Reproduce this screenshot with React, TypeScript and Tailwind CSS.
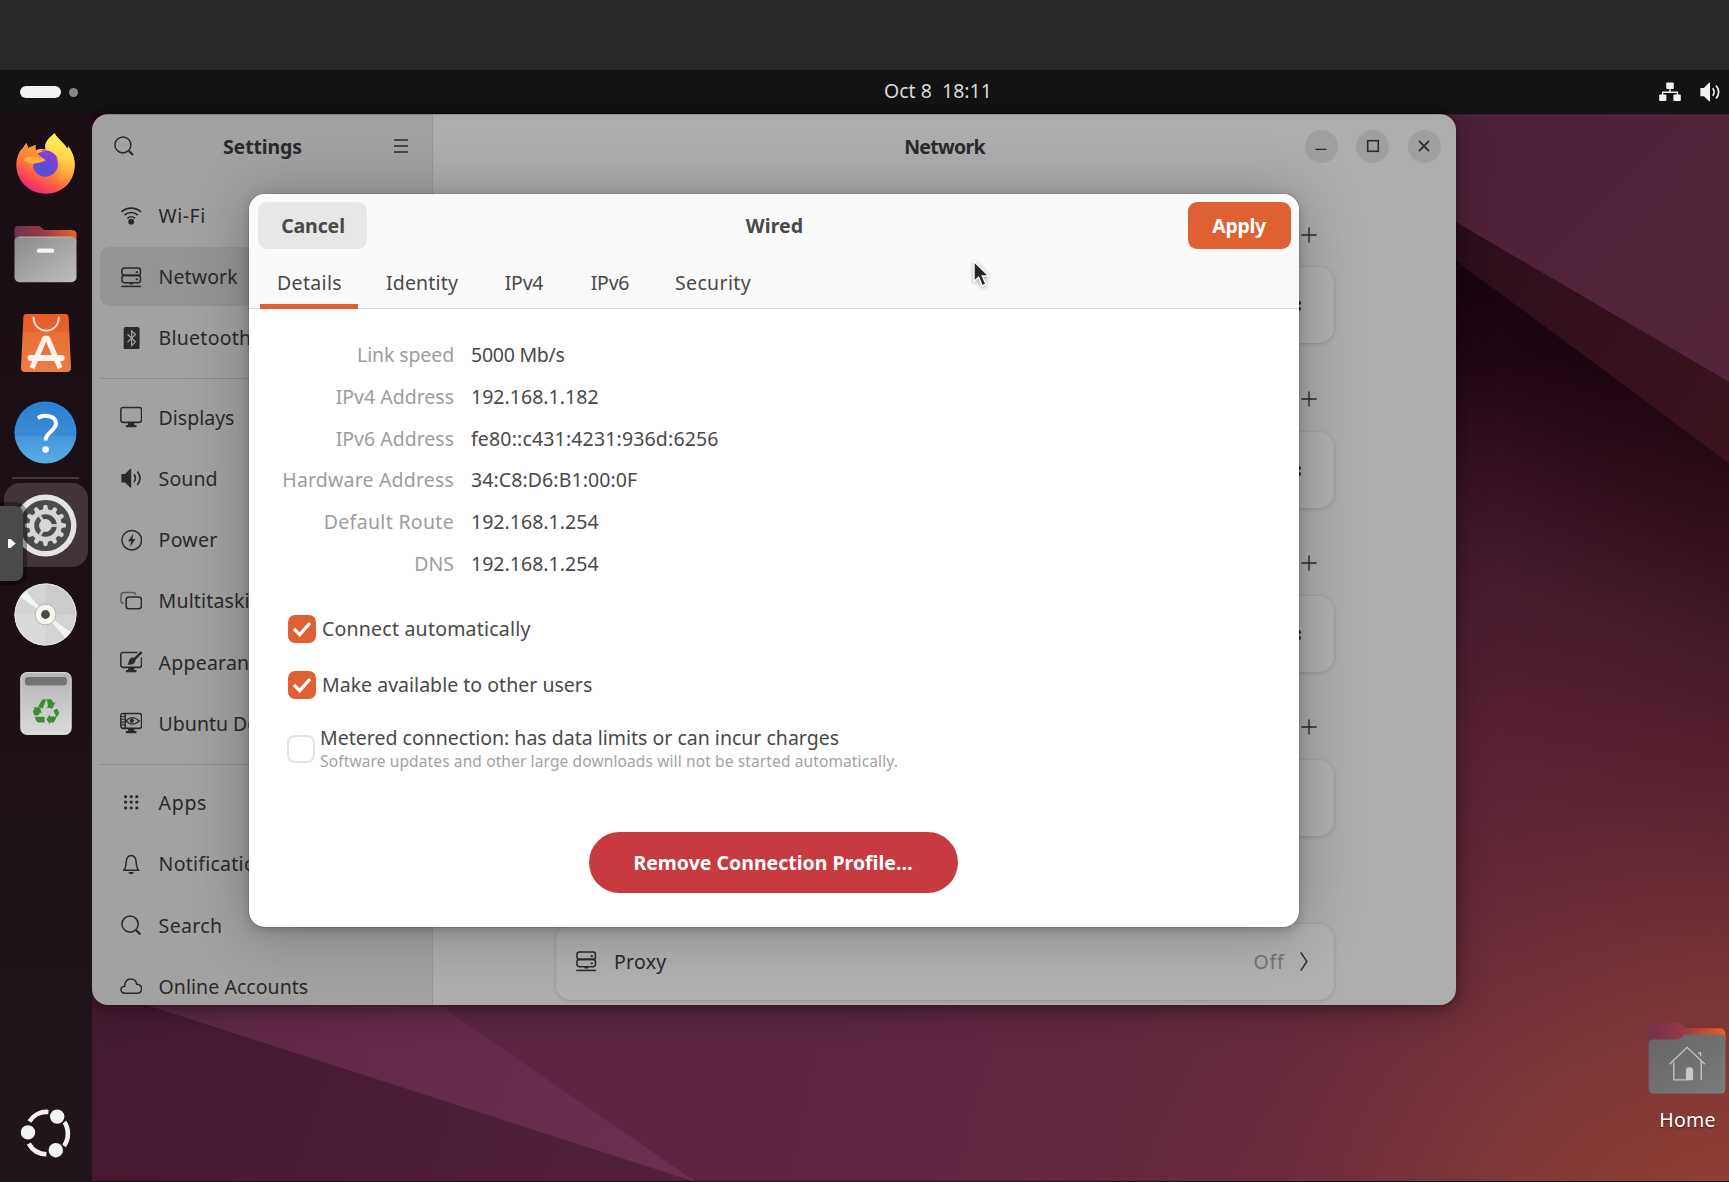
import React from "react";

type IconProps = { className?: string };

const ICON = "h-[22.4px] w-[22.4px] shrink-0";

/* ---------- wallpaper ---------- */

function Wallpaper() {
  return (
    <svg className="absolute inset-0" width="1729" height="1182" viewBox="0 0 1729 1182">
      <defs>
        <linearGradient id="wpDeep" gradientUnits="userSpaceOnUse" x1="1590" y1="360" x2="1055" y2="1084">
          <stop offset="0" stopColor="#1b0510" />
          <stop offset="0.08" stopColor="#220815" />
          <stop offset="0.25" stopColor="#3a1428" />
          <stop offset="0.42" stopColor="#4a1b33" />
          <stop offset="0.7" stopColor="#5a2540" />
          <stop offset="1" stopColor="#5c2642" />
        </linearGradient>
        <radialGradient id="wpGlow" gradientUnits="userSpaceOnUse" cx="1780" cy="1320" r="1000">
          <stop offset="0" stopColor="#a8462e" stopOpacity="0.95" />
          <stop offset="0.3" stopColor="#8e3f36" stopOpacity="0.74" />
          <stop offset="0.55" stopColor="#7a3036" stopOpacity="0.44" />
          <stop offset="1" stopColor="#6a2a3c" stopOpacity="0" />
        </radialGradient>
        <linearGradient id="wpBand" gradientUnits="userSpaceOnUse" x1="1456" y1="240" x2="1729" y2="420">
          <stop offset="0" stopColor="#2c0f1c" />
          <stop offset="1" stopColor="#3a131d" />
        </linearGradient>
        <linearGradient id="wpTop" gradientUnits="userSpaceOnUse" x1="1456" y1="120" x2="1729" y2="380">
          <stop offset="0" stopColor="#4e2138" />
          <stop offset="1" stopColor="#55243a" />
        </linearGradient>
        <linearGradient id="wpTri" gradientUnits="userSpaceOnUse" x1="200" y1="1000" x2="640" y2="1180">
          <stop offset="0" stopColor="#5f2846" />
          <stop offset="1" stopColor="#6b2e4e" />
        </linearGradient>
        <linearGradient id="wpLeft" gradientUnits="userSpaceOnUse" x1="92" y1="1000" x2="600" y2="1182">
          <stop offset="0" stopColor="#45192f" />
          <stop offset="1" stopColor="#522039" />
        </linearGradient>
      </defs>
      <rect width="1729" height="1182" fill="#2b0a20" />
      <path d="M0 0H1729V1182H0Z" fill="url(#wpDeep)" />
      <path d="M0 0H1729V1182H0Z" fill="url(#wpGlow)" />
      <path d="M1300 145L1729 463V382L1300 130Z" fill="url(#wpBand)" />
      <path d="M0 0H1729V382L1300 130.6L0 0Z" fill="url(#wpTop)" />
      <path d="M0 900L147 1005L696 1182H0Z" fill="url(#wpLeft)" />
      <path d="M60 977L147 1005L696 1182L400 978Z" fill="url(#wpTri)" />
      <path d="M80 100h40v40h-40z" fill="#2b0020" />
      <path d="M0 1181.5H1729" stroke="#1a0c12" />
    </svg>
  );
}

/* ---------- symbolic icons ---------- */

function Search({ className = ICON }: IconProps) {
  return (
    <svg className={className} viewBox="0 0 16 16" fill="none" stroke="currentColor" strokeWidth="1.1">
      <circle cx="7.2" cy="7.2" r="5.8" />
      <path d="M11.4 11.4L14.6 14.6" strokeWidth="1.6" />
    </svg>
  );
}

function Wifi() {
  return (
    <svg className={ICON} viewBox="0 0 16 16" fill="none" stroke="currentColor" strokeWidth="1.2">
      <path d="M1 5.6A10.4 10.4 0 0 1 15 5.6" />
      <path d="M3.2 8A7 7 0 0 1 12.8 8" />
      <path d="M5.3 10.2A4 4 0 0 1 10.7 10.2" />
      <circle cx="8" cy="12.6" r="2.1" fill="currentColor" stroke="none" />
    </svg>
  );
}

function Server() {
  return (
    <svg className={ICON} viewBox="0 0 16 16" fill="none" stroke="currentColor" strokeWidth="1.1">
      <rect x="1.4" y="1.4" width="13.2" height="5.3" rx="1.7" />
      <rect x="1.4" y="6.7" width="13.2" height="5.2" rx="1.7" />
      <path d="M11.2 4.4h1.6M11.2 9.6h1.6" strokeWidth="1.2" />
      <path d="M0.9 14.6H15.1" />
      <path d="M6.8 12h2.6v1.2h-2.6z" fill="currentColor" stroke="none" />
    </svg>
  );
}

function Bluetooth() {
  return (
    <svg className={ICON} viewBox="0 0 16 16">
      <rect x="2.6" y="0" width="11.4" height="16" rx="1.6" fill="currentColor" />
      <path d="M5.4 5.2L11 10.6L8.3 13.2V2.8L11 5.4L5.4 10.8" fill="none" stroke="#a2a2a2" strokeWidth="0.9" />
    </svg>
  );
}

function Monitor({ children }: { children?: React.ReactNode }) {
  return (
    <svg className={ICON} viewBox="0 0 16 16" fill="none" stroke="currentColor" strokeWidth="1.1">
      <rect x="0.6" y="1.1" width="14.8" height="10.6" rx="1.6" />
      <path d="M5.8 12h4.4v1.6h1.6v1.5H4.2v-1.5h1.6z" fill="currentColor" stroke="none" />
      {children}
    </svg>
  );
}

function Appearance() {
  return (
    <Monitor>
      <path d="M12 0.4h4v4h-2z" fill="#a2a2a2" stroke="none" />
      <path d="M15.4 0.7L9.8 6.4" strokeWidth="1.7" />
      <path d="M9.2 4.6C10.9 5 11.4 6.1 10.8 7.6C10 9.4 8 10.2 5.2 9.6C6.5 8.8 6 7.6 6.6 6.3C7.1 5.2 8 4.4 9.2 4.6Z" fill="currentColor" stroke="none" />
    </Monitor>
  );
}

function UbuntuDesktop() {
  return (
    <Monitor>
      <path d="M3.7 1.2V11.6" />
      <path d="M0.8 3.2h2.6M0.8 5.2h2.6M0.8 7.2h2.6M0.8 9.2h2.6" strokeWidth="0.8" />
      <path d="M4.4 6.4C7 3.2 10.6 3.2 13.8 6.4C10.6 9.4 7 9.4 4.4 6.4Z" strokeWidth="0.9" />
      <circle cx="8.5" cy="6.3" r="1.5" fill="currentColor" stroke="none" />
    </Monitor>
  );
}

function Speaker({ className = ICON }: IconProps) {
  return (
    <svg className={className} viewBox="0 0 16 16" fill="none" stroke="currentColor">
      <path d="M1 5h2.6L7.3 1.3H8V14.7H7.3L3.6 11H1z" fill="currentColor" stroke="none" />
      <path d="M10 5.2Q12 8 10 10.8" strokeWidth="1.2" />
      <path d="M12.4 3.2Q16.2 8 12.4 12.8" strokeWidth="1.2" />
    </svg>
  );
}

function Power() {
  return (
    <svg className={ICON} viewBox="0 0 16 16" fill="none" stroke="currentColor" strokeWidth="1.1">
      <circle cx="8.4" cy="8" r="7" />
      <path d="M9.6 3.2L5.8 8.8H8L7.2 12.8L11 7.2H8.8Z" fill="currentColor" stroke="none" />
    </svg>
  );
}

function Multitasking() {
  return (
    <svg className={ICON} viewBox="0 0 16 16" fill="none" stroke="currentColor" strokeWidth="1.1">
      <path d="M2.6 9.6C1.4 9.6 0.8 9 0.8 7.8V3.6C0.8 2.4 1.4 1.8 2.6 1.8H9.4C10.6 1.8 11.1 2.4 11.2 3.4" opacity="0.6" />
      <rect x="4.4" y="5" width="10.9" height="8.4" rx="2" />
    </svg>
  );
}

function Apps() {
  return (
    <svg className={ICON} viewBox="0 0 16 16" fill="currentColor">
      {[3, 7, 11].map((y) =>
        [3, 7, 11].map((x) => <rect key={`${x}-${y}`} x={x} y={y} width="2" height="2" rx="0.4" />)
      )}
    </svg>
  );
}

function Bell() {
  return (
    <svg className={ICON} viewBox="0 0 16 16" fill="none" stroke="currentColor" strokeWidth="1.1">
      <path d="M2.6 12.4H13.4C12 11.2 11.8 9.6 11.6 6.8C11.4 3.4 10.2 1.8 8 1.8C5.8 1.8 4.6 3.4 4.4 6.8C4.2 9.6 4 11.2 2.6 12.4Z" strokeLinejoin="round" />
      <path d="M6 13.6h4Q9.4 15.2 8 15.2Q6.6 15.2 6 13.6Z" fill="currentColor" stroke="none" />
    </svg>
  );
}

function Cloud() {
  return (
    <svg className={ICON} viewBox="0 0 16 16" fill="none" stroke="currentColor" strokeWidth="1.1">
      <path d="M3.4 13C1.6 13 0.7 11.8 0.7 10.6C0.7 9 2 8.2 3.4 8.1C3.2 5 5 2.8 7.7 2.8C10 2.8 11.7 4.4 11.9 6.6C14 6.7 15.4 8 15.4 9.8C15.4 11.6 14.2 13 12.2 13Z" />
    </svg>
  );
}

function Wired() {
  return (
    <svg className="h-[22px] w-[22px]" viewBox="0 0 22 22" fill="currentColor">
      <rect x="7.2" y="1.4" width="7.6" height="6.6" rx="1" />
      <rect x="0.2" y="13.6" width="7.2" height="6.4" rx="1" />
      <rect x="14.4" y="13.6" width="7.4" height="6.4" rx="1" />
      <path d="M11 8V11M3.6 14V11.2H18.4V14" fill="none" stroke="currentColor" strokeWidth="1.4" />
    </svg>
  );
}

/* ---------- dock icons ---------- */

function Firefox() {
  return (
    <svg className="h-[61px] w-[59px]" viewBox="49 69 177 183">
      <defs>
        <linearGradient id="ffBody" x1="0.8" y1="0.1" x2="0.3" y2="1">
          <stop offset="0" stopColor="#fff04f" />
          <stop offset="0.3" stopColor="#ffc23c" />
          <stop offset="0.55" stopColor="#ff8a3a" />
          <stop offset="0.78" stopColor="#ff4f50" />
          <stop offset="1" stopColor="#e0287a" />
        </linearGradient>
        <radialGradient id="ffGlobe" cx="0.4" cy="0.7" r="0.8">
          <stop offset="0" stopColor="#4a53d0" />
          <stop offset="0.6" stopColor="#7145d8" />
          <stop offset="1" stopColor="#a43be0" />
        </radialGradient>
        <linearGradient id="ffFace" x1="0" y1="1" x2="0.6" y2="0">
          <stop offset="0" stopColor="#ff6a3c" />
          <stop offset="1" stopColor="#ff9a3a" />
        </linearGradient>
        <linearGradient id="ffFlame" x1="0.6" y1="0" x2="0.4" y2="1">
          <stop offset="0" stopColor="#fff463" />
          <stop offset="0.5" stopColor="#ffd84a" />
          <stop offset="1" stopColor="#ff8f3a" />
        </linearGradient>
      </defs>
      <path
        d="M165 70C172 86 196 100 203 118L206 109C222 132 229 155 224 180C217 222 184 251 138 251C88 251 50 212 50 165C50 140 60 122 70 114L80 99L86 114L107 105L108 122C120 114 130 118 138 118C136 95 150 82 165 70Z"
        fill="url(#ffBody)"
      />
      <path d="M165 70C172 86 196 100 203 118L206 109C220 130 227 150 223 172C217 200 196 212 176 206C188 186 186 154 168 140C150 126 138 124 136 108C138 92 152 80 165 70Z" fill="url(#ffFlame)" />
      <circle cx="137" cy="162" r="38" fill="url(#ffGlobe)" />
      <path d="M122 122C150 116 168 132 176 148C168 140 160 138 152 140C148 130 138 124 122 122Z" fill="#8c3ad8" />
      <path
        d="M70 114L80 99L86 114L107 105C106 118 110 128 118 136C126 142 134 146 138 150C132 158 118 158 108 160C98 164 98 174 100 184C92 172 84 160 74 152C64 148 58 146 56 150C58 136 62 122 70 114Z"
        fill="url(#ffFace)"
      />
      <path d="M74 146C88 138 108 138 136 149C128 157 116 156 104 160C94 164 86 156 74 152Z" fill="#ffab3d" />
    </svg>
  );
}

function Folder({ home }: { home?: boolean }) {
  const id = home ? "home" : "files";
  return (
    <svg className={home ? "h-[72px] w-[78px]" : "h-[58px] w-[63px]"} viewBox="0 0 63 58" preserveAspectRatio="none">
      <defs>
        <linearGradient id={`${id}Back`} x1="0" y1="0" x2="1" y2="0">
          <stop offset="0" stopColor="#72304f" />
          <stop offset="0.45" stopColor="#963a45" />
          <stop offset="1" stopColor="#e4622d" />
        </linearGradient>
        <linearGradient id={`${id}Front`} x1="0" y1="0" x2="1" y2="1">
          <stop offset="0" stopColor={home ? "#646464" : "#8b8b8b"} />
          <stop offset="1" stopColor={home ? "#7c7c7c" : "#bdbdbd"} />
        </linearGradient>
      </defs>
      <path d="M0.5 18V5Q0.5 1 4.5 1H24Q26 1 27 2.2L30 5H58Q62.5 5 62.5 9.5V18Z" fill={`url(#${id}Back)`} />
      {home ? (
        <>
          <path d="M0.5 17Q0.5 14 4 14H23Q25 14 26.4 12.8L28 11Q29.4 10 31 10H59Q62.5 10 62.5 13V54Q62.5 57.6 59 57.6H4Q0.5 57.6 0.5 54Z" fill="url(#homeFront)" />
          <g fill="none" stroke="#c4c4c4" strokeWidth="1.1">
            <path d="M17.4 34L31.5 20.4L46 34" />
            <path d="M20.8 32V46.6H31.4M43 31V47" />
            <path d="M40.5 25H42.5V27.5" />
          </g>
          <path d="M30.6 47V39Q30.6 36.4 33.4 36.4Q36.4 36.4 36.4 39V47Z" fill="#c8c8c8" />
        </>
      ) : (
        <>
          <rect x="0.5" y="11.6" width="62" height="45.6" rx="5" fill="url(#filesFront)" />
          <path d="M5 12.2H58" stroke="#b8b8b8" strokeWidth="0.8" />
          <rect x="23" y="23.4" width="17" height="4.4" rx="1.6" fill="#f2f2f2" />
        </>
      )}
    </svg>
  );
}

function AppCenter() {
  return (
    <svg className="h-[60px] w-[52px]" viewBox="0 0 52 60">
      <defs>
        <linearGradient id="bag" x1="0" y1="0" x2="0" y2="1">
          <stop offset="0" stopColor="#e95a2a" />
          <stop offset="0.3" stopColor="#e8622f" />
          <stop offset="0.31" stopColor="#e96e38" />
          <stop offset="1" stopColor="#ea7f45" />
        </linearGradient>
      </defs>
      <path d="M3.4 4Q3.6 1 6.6 1H45.4Q48.4 1 48.6 4L51 54.6Q51.2 59 47 59H5Q0.8 59 1 54.6Z" fill="url(#bag)" />
      <path d="M13.6 4.6C14 22 38.4 22 38.8 4.6" fill="none" stroke="#fde3d3" strokeWidth="2" strokeLinecap="round" />
      <g fill="none" stroke="#fff5ee">
        <path d="M12 55L24.6 25.4H27.6L40.2 55" strokeWidth="5.2" strokeLinejoin="round" />
        <path d="M10.6 45H41.6" strokeWidth="6" strokeLinecap="round" />
      </g>
    </svg>
  );
}

function Help() {
  return (
    <svg className="h-[63px] w-[63px]" viewBox="0 0 63 63" fill="none">
      <defs>
        <linearGradient id="help" x1="0" y1="0" x2="0" y2="1">
          <stop offset="0" stopColor="#2f7fd0" />
          <stop offset="0.55" stopColor="#3a8cd6" />
          <stop offset="0.56" stopColor="#4496da" />
          <stop offset="1" stopColor="#5aaee6" />
        </linearGradient>
      </defs>
      <circle cx="31.5" cy="31.5" r="31" fill="url(#help)" />
      <path d="M23.8 17C30 13.4 42 14 42 22.6C42 30 31.6 30.6 31.6 39.4" stroke="#fff" strokeWidth="4" />
      <circle cx="31.6" cy="48.6" r="3.3" fill="#fff" />
    </svg>
  );
}

function SettingsGear() {
  const teeth = Array.from({ length: 12 }, (_, i) => i * 30);
  return (
    <svg className="h-[63px] w-[63px]" viewBox="-31.5 -31.5 63 63">
      <circle r="31" fill="#e4e4e4" />
      <circle r="25.6" fill="#4b4b4b" />
      {teeth.map((a) => (
        <path key={a} d="M-2.8 -14L-1.9 -20Q0 -21.4 1.9 -20L2.8 -14Z" fill="#d6d6d6" transform={`rotate(${a})`} />
      ))}
      <circle r="13.8" fill="none" stroke="#d6d6d6" strokeWidth="5" />
      {[0, 120, 240].map((a) => (
        <path key={a} d="M0 -1.4H13V1.4H0Z" fill="#cfcfcf" transform={`rotate(${a})`} />
      ))}
      <circle r="6.4" fill="#d6d6d6" />
    </svg>
  );
}

function Disc() {
  return (
    <svg className="h-[63px] w-[63px]" viewBox="-31.5 -31.5 63 63">
      <circle r="31" fill="#d4d4d4" />
      <path d="M0 0V-31A31 31 0 0 1 31 0Z" fill="#cbcbcb" />
      <path d="M0 0V31A31 31 0 0 1 -31 0Z" fill="#dadada" />
      <path d="M0 0L-25.4 -17.8A31 31 0 0 1 -20 -23.7Z" fill="#f4f4f2" />
      <path d="M0 0L25.4 17.8A31 31 0 0 1 20 23.7Z" fill="#f4f4f2" />
      <circle r="30.4" fill="none" stroke="#e6e6e6" />
      <circle r="10.4" fill="#f7f5f0" stroke="#b9b3a6" />
      <circle r="4.4" fill="#4a4a4a" />
    </svg>
  );
}

function Trash() {
  return (
    <svg className="h-[63px] w-[52px]" viewBox="0 0 52 63">
      <defs>
        <linearGradient id="bin" x1="0" y1="0" x2="0" y2="1">
          <stop offset="0" stopColor="#b4b4b4" />
          <stop offset="1" stopColor="#dadada" />
        </linearGradient>
      </defs>
      <rect x="0.8" y="0.6" width="50.4" height="61.8" rx="6" fill="url(#bin)" stroke="#e2e2e2" />
      <rect x="5" y="5" width="42" height="8.4" rx="3.4" fill="#737373" />
      <g fill="#3f8a34">
        <path d="M18.2 34.6L21.8 28.2Q22.4 27.2 23.6 27.2H26.4L22.6 36.8Z" />
        <path d="M26.8 27.2H30.2Q31.4 27.2 32 28.2L33.6 31L35.4 30L32.6 36.4L26 35.4L28 34.2Z" />
        <path d="M33.4 38.6L37 36.4L38.8 39.8Q39.4 41 38.6 42.2L36.6 45.4Z" />
        <path d="M36 46.2L34.4 49.4Q33.8 50.6 32.4 50.6H30V52.4L26.4 47.2L30 42.2V44.6H36Z" />
        <path d="M24.6 44.8V50.6H18.8Q17.4 50.6 16.8 49.6L15.2 46.6Q14.8 45.6 15.4 44.8Z" />
        <path d="M14.8 43.4L13.2 41Q12.6 40 13.2 39L14.6 36.4L12.8 35.4L19.8 35.2L22 41.4L20 40.4L18.4 43.2Z" />
      </g>
    </svg>
  );
}

function UbuntuLogo() {
  return (
    <svg className="h-[50px] w-[50px]" viewBox="-25 -25 50 50">
      <g fill="none" stroke="#f2f2f2" strokeWidth="4.6">
        <path d="M-16.6 -11.6A20.4 20.4 0 0 1 2.4 -21" />
        <path d="M18.4 -11A21.4 21.4 0 0 1 18 13" />
        <path d="M0.4 21.2A20.4 20.4 0 0 1 -17.2 10.6" />
      </g>
      <g fill="#f2f2f2" stroke="#1f151a" strokeWidth="1.6">
        <circle cx="11.2" cy="-16.4" r="8" />
        <circle cx="-18" cy="-0.6" r="8" />
        <circle cx="9.8" cy="17.2" r="8" />
      </g>
    </svg>
  );
}

/* ---------- shell ---------- */

function TopBar() {
  return (
    <header className="flex h-11 items-center bg-[#131313] text-[#f2f2f2]">
      <div className="flex w-[884px] items-center gap-[7.5px] pl-[20.4px]">
        <span className="h-3 w-[41px] rounded-full bg-[#f2f2f2]" />
        <span className="h-[9px] w-[9px] rounded-full bg-[#868686]" />
      </div>
      <div className="-mt-1 whitespace-pre text-[#dedede]">Oct 8{"  "}18:11</div>
      <div className="ml-auto flex items-center gap-[18px] pr-2">
        <Wired />
        <Speaker className="h-[22px] w-[22px]" />
      </div>
    </header>
  );
}

function DockItem({ active, children }: { active?: boolean; children: React.ReactNode }) {
  return (
    <div className={`flex h-[84px] w-[84px] shrink-0 items-center justify-center rounded-2xl ${active ? "bg-[#41353a]" : ""}`}>
      {children}
    </div>
  );
}

function Dock() {
  return (
    <nav className="absolute top-[114px] left-0 flex h-[1068px] w-[92px] flex-col items-center bg-linear-to-b from-[#190e14] via-[#1c1016] to-[#1f151a] pt-[9px] pr-[0.4px]">
      <div className="flex flex-col gap-[5px]">
        <DockItem><div className="-mt-[3px]"><Firefox /></div></DockItem>
        <DockItem><Folder /></DockItem>
        <DockItem><div className="-mt-[1px]"><AppCenter /></div></DockItem>
        <DockItem><Help /></DockItem>
      </div>
      <div className="mt-[3px] mb-[4px] h-[2px] w-[67px] shrink-0 bg-[#40363b]" />
      <div className="flex flex-col gap-[5px]">
        <DockItem active><SettingsGear /></DockItem>
        <DockItem><Disc /></DockItem>
        <DockItem><Trash /></DockItem>
      </div>
      <div className="mt-auto mb-[24px]"><UbuntuLogo /></div>
    </nav>
  );
}

/* ---------- settings window ---------- */

type Item = { label: string; icon: React.ReactNode; track?: string; selected?: boolean };

const GROUPS: Item[][] = [
  [
    { label: "Wi-Fi", icon: <Wifi />, track: "tracking-[0.5px]" },
    { label: "Network", icon: <Server />, track: "tracking-[0.1px]", selected: true },
    { label: "Bluetooth", icon: <Bluetooth />, track: "tracking-[0.26px]" },
  ],
  [
    { label: "Displays", icon: <Monitor />, track: "tracking-normal" },
    { label: "Sound", icon: <Speaker />, track: "tracking-[0.1px]" },
    { label: "Power", icon: <Power />, track: "tracking-[0.27px]" },
    { label: "Multitasking", icon: <Multitasking />, track: "tracking-[0.16px]" },
    { label: "Appearance", icon: <Appearance />, track: "tracking-[0.22px]" },
    { label: "Ubuntu Desktop", icon: <UbuntuDesktop />, track: "tracking-normal" },
  ],
  [
    { label: "Apps", icon: <Apps />, track: "tracking-[0.7px]" },
    { label: "Notifications", icon: <Bell />, track: "tracking-[0.25px]" },
    { label: "Search", icon: <Search />, track: "tracking-[0.35px]" },
    { label: "Online Accounts", icon: <Cloud />, track: "tracking-[0.05px]" },
  ],
];

function Sidebar() {
  return (
    <aside className="flex w-[341px] shrink-0 flex-col border-r border-[#989898] bg-[#a2a2a2]">
      <div className="flex h-[64px] shrink-0 items-center justify-between pr-[23px] pl-[21px]">
        <Search className="h-[22px] w-[22px]" />
        <h1 className="mr-[3px] font-bold tracking-[-0.12px]">Settings</h1>
        <svg className="h-4 w-4" viewBox="0 0 16 16" stroke="currentColor" strokeWidth="1.4">
          <path d="M1 2H15M1 8H15M1 14H15" />
        </svg>
      </div>
      <div className="mt-[8.2px] px-2">
        {GROUPS.map((group, g) => (
          <div key={g}>
            {g > 0 && <div className="mt-[11px] mb-[8.6px] h-px bg-[#8d8d8d]" />}
            <ul className="flex flex-col gap-[2.4px]">
              {group.map((item) => (
                <li
                  key={item.label}
                  className={`flex h-[58.8px] items-center gap-[16.6px] rounded-[9px] pl-[19.6px] whitespace-nowrap ${item.selected ? "bg-[#959595]" : ""} ${item.track}`}
                >
                  {item.icon}
                  {item.label}
                </li>
              ))}
            </ul>
          </div>
        ))}
      </div>
    </aside>
  );
}

function Plus() {
  return (
    <svg className="h-4 w-4" viewBox="0 0 16 16" stroke="currentColor" strokeWidth="1.4">
      <path d="M8 0.4V15.6M0.4 8H15.6" />
    </svg>
  );
}

function CardGear() {
  return (
    <svg className="h-5 w-5" viewBox="-10 -10 20 20" fill="currentColor">
      {[0, 45, 90, 135, 180, 225, 270, 315].map((a) => (
        <path key={a} d="M-2 -6L-1.6 -9.4H1.6L2 -6Z" transform={`rotate(${a + 22.5})`} />
      ))}
      <circle r="5.4" fill="none" stroke="currentColor" strokeWidth="3" />
    </svg>
  );
}

const CARD = "flex h-[76px] shrink-0 items-center rounded-[15px] bg-[#b0b0b0] shadow-[0_1px_4px_rgba(0,0,0,0.14),0_0_0_1px_rgba(0,0,0,0.02)]";

function WindowButton({ children }: { children: React.ReactNode }) {
  return (
    <span className="flex h-[33px] w-[33px] items-center justify-center rounded-full bg-[#9f9f9f]">
      <svg className="h-[14px] w-[14px]" viewBox="0 0 14 14" fill="none" stroke="currentColor" strokeWidth="1.8">
        {children}
      </svg>
    </span>
  );
}

function NetworkPanel() {
  return (
    <main className="flex min-w-0 flex-1 flex-col bg-[#adadad]">
      <div className="grid h-[64px] shrink-0 grid-cols-[1fr_auto_1fr] items-center">
        <span />
        <h2 className="font-bold tracking-[-0.72px]">Network</h2>
        <div className="flex justify-end gap-[18.4px] pr-[15.5px]">
          <WindowButton><path d="M1.4 10.4H12.6" strokeWidth="1.4" /></WindowButton>
          <WindowButton><rect x="1.7" y="1.7" width="10.6" height="10.6" strokeWidth="1.6" /></WindowButton>
          <WindowButton><path d="M1.9 1.9L12.1 12.1M12.1 1.9L1.9 12.1" /></WindowButton>
        </div>
      </div>
      <div className="mx-auto flex w-[778px] flex-col pt-px">
        {[true, true, true, false].map((gear, i) => (
          <section key={i} className="flex h-[164.3px] shrink-0 flex-col">
            <div className="flex h-[88.4px] items-start justify-end pt-[47.6px] pr-[16.5px]">
              <Plus />
            </div>
            <div className={`${CARD} justify-end pr-[31.4px] pt-[2px]`}>{gear && <CardGear />}</div>
          </section>
        ))}
        <div className={`${CARD} mt-[87.4px] justify-between pr-[24px] pl-[19.4px]`}>
          <div className="flex items-center gap-[16.6px] tracking-[0.3px]">
            <Server />
            Proxy
          </div>
          <div className="flex items-center gap-[13px]">
            <span className="tracking-[0.8px] text-[#747474]">Off</span>
            <svg className="h-[21px] w-[12px]" viewBox="0 0 12 22" fill="none" stroke="currentColor" strokeWidth="1.5">
              <path d="M2.6 1.4L9 11L2.6 20.6" />
            </svg>
          </div>
        </div>
      </div>
    </main>
  );
}

/* ---------- connection dialog ---------- */

const TABS = [
  { label: "Details", cls: "w-[98px] tracking-[0.34px] border-[#de6033] pl-[1px]" },
  { label: "Identity", cls: "w-[108px] tracking-[0.18px] border-transparent" },
  { label: "IPv4", cls: "w-[76px] tracking-[-0.24px] border-transparent" },
  { label: "IPv6", cls: "w-[76px] tracking-[-0.24px] border-transparent" },
  { label: "Security", cls: "w-[110px] tracking-[0.35px] border-transparent" },
];

const DETAILS = [
  { label: "Link speed", lt: "tracking-[-0.12px]", value: "5000 Mb/s", vt: "tracking-[-0.26px]" },
  { label: "IPv4 Address", lt: "tracking-normal", value: "192.168.1.182", vt: "tracking-[0.03px]" },
  { label: "IPv6 Address", lt: "tracking-normal", value: "fe80::c431:4231:936d:6256", vt: "tracking-[0.16px]" },
  { label: "Hardware Address", lt: "tracking-[0.18px]", value: "34:C8:D6:B1:00:0F", vt: "tracking-[0.09px]" },
  { label: "Default Route", lt: "tracking-[0.32px]", value: "192.168.1.254", vt: "tracking-[0.03px]" },
  { label: "DNS", lt: "tracking-normal", value: "192.168.1.254", vt: "tracking-[0.03px]" },
];

function Checked() {
  return (
    <span className="flex h-7 w-7 shrink-0 items-center justify-center rounded-[7px] bg-[#de6033]">
      <svg className="h-[18px] w-[20px]" viewBox="0 0 20 18" fill="none" stroke="#fff" strokeWidth="3.2">
        <path d="M2 8.8L7.6 14.6L18 3.2" />
      </svg>
    </span>
  );
}

function ConnectionDialog() {
  return (
    <div className="absolute top-[194px] left-[249px] flex h-[733px] w-[1050px] flex-col overflow-hidden rounded-[16px] bg-white text-[#494949] shadow-[0_0_0_1px_rgba(0,0,0,0.08),0_3px_12px_rgba(0,0,0,0.22),0_4px_60px_4px_rgba(0,0,0,0.22)]">
      <div className="border-b border-[#dcdcdc] bg-[#fafafa]">
        <div className="grid h-[64px] grid-cols-[1fr_auto_1fr] items-start pt-2 pr-2 pl-[9px] font-bold">
          <button className="h-[47px] w-[109px] rounded-[9px] bg-[#e7e7e7] pl-px tracking-[-0.12px]">Cancel</button>
          <h3 className="leading-[47px] tracking-[0.09px]">Wired</h3>
          <button className="h-[47px] w-[103px] justify-self-end rounded-[9px] bg-[#de6033] pr-px tracking-[-0.35px] text-white">Apply</button>
        </div>
        <div className="-mb-px flex gap-[10px] pl-[11px]">
          {TABS.map((tab) => (
            <div key={tab.label} className={`flex h-[51px] items-center justify-center border-b-5 pt-[3px] ${tab.cls}`}>
              {tab.label}
            </div>
          ))}
        </div>
      </div>
      <dl className="pt-[25px]">
        {DETAILS.map((row) => (
          <div key={row.label} className="flex h-[41.75px] items-center gap-[17px] leading-none">
            <dt className={`w-[205px] text-right text-[#9d9d9d] ${row.lt}`}>{row.label}</dt>
            <dd className={row.vt}>{row.value}</dd>
          </div>
        ))}
      </dl>
      <label className="mt-[30.5px] flex h-7 items-center gap-[6px] pl-[39px] tracking-[0.22px]">
        <Checked />
        <span className="-mt-px">Connect automatically</span>
      </label>
      <label className="mt-[27.7px] flex h-7 items-center gap-[6px] pl-[39px] tracking-[0.02px]">
        <Checked />
        Make available to other users
      </label>
      <label className="mt-[25px] flex items-center gap-[5.5px] pl-[37.6px]">
        <span className="mt-[2px] h-7 w-7 shrink-0 rounded-[8px] border-2 border-[#e2e2e2] bg-white" />
        <span className="flex flex-col">
          <span className="leading-[27px]">Metered connection: has data limits or can incur charges</span>
          <span className="text-[15.5px] leading-[21px] tracking-[0.12px] text-[#a3a3a3]">
            Software updates and other large downloads will not be started automatically.
          </span>
        </span>
      </label>
      <button className="mt-[60px] mr-[2px] h-[61px] w-[369px] self-center rounded-full bg-[#c73a40] font-bold text-white">
        Remove Connection Profile…
      </button>
    </div>
  );
}

export default function App() {
  return (
    <div className="relative h-[1182px] w-[1729px] overflow-hidden bg-[#2b0a20] font-['Noto_Sans','Open_Sans',sans-serif] text-[19.5px] leading-[27px]">
      <Wallpaper />
      <div className="relative">
        <div className="h-[70px] bg-[#282828]" />
        <TopBar />
      </div>

      <div className="absolute top-[1022px] left-[1648px] flex w-[78px] flex-col items-center text-white">
        <Folder home />
        <span className="mt-[12px] pl-[1px] tracking-[0.3px] [text-shadow:0_1px_2px_rgba(0,0,0,0.6)]">Home</span>
      </div>

      <div className="absolute top-[114px] left-[92px] flex h-[891px] w-[1364px] overflow-hidden rounded-[16px] text-[#2a2a2a] shadow-[0_2px_10px_rgba(0,0,0,0.3),0_4px_34px_rgba(0,0,0,0.3)]">
        <Sidebar />
        <NetworkPanel />
      </div>
      <Dock />
      <div className="absolute top-[114px] left-0 h-px w-full bg-black/20" />
      <ConnectionDialog />

      <div className="absolute top-[505.5px] left-0 flex h-[75px] w-[23px] items-center rounded-r-[8px] bg-[#4a4a4a] pl-[8px] shadow-[0_0_0_4px_rgba(0,0,0,0.35)]">
        <svg className="h-[9px] w-[8px]" viewBox="0 0 8 9" fill="#fff">
          <path d="M0 0H2.6L7.6 4.5L2.6 9H0Z" />
        </svg>
      </div>

      <svg className="absolute top-[259px] left-[971px] drop-shadow-[0_1px_2px_rgba(0,0,0,0.35)]" width="22" height="30" viewBox="0 0 22 30">
        <path d="M3 2.4V22.4L7.6 18.2L11.2 27L15 25.2L11.2 17L17.6 16.8Z" fill="#262626" stroke="#fff" strokeWidth="1.4" />
      </svg>
    </div>
  );
}
